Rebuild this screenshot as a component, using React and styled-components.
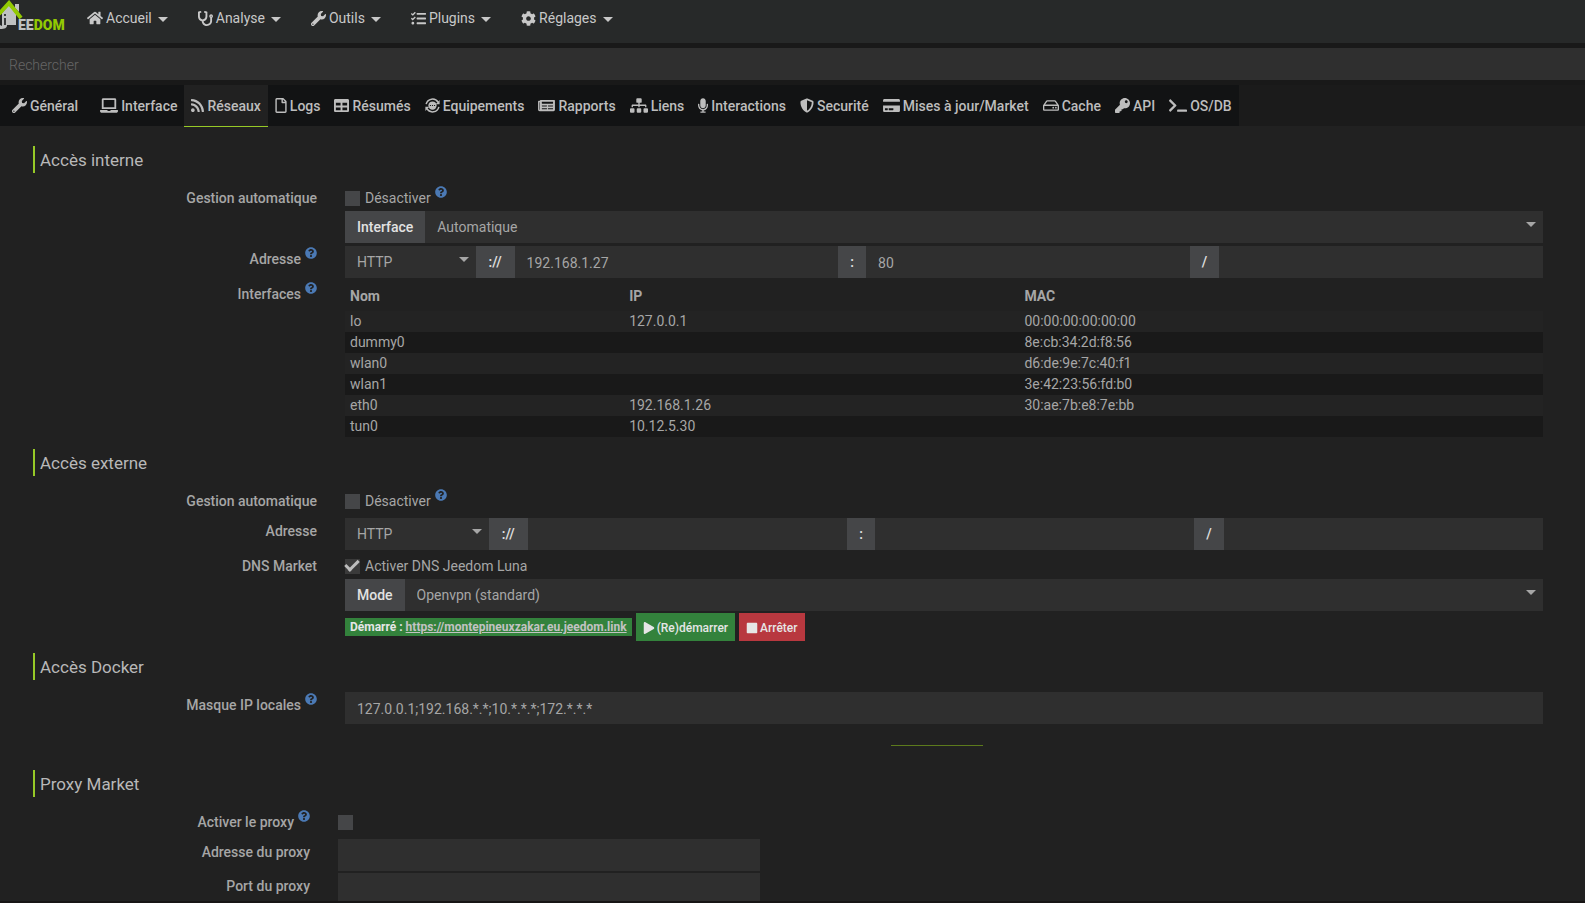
import React, { useState } from 'react';
import styled, { createGlobalStyle } from 'styled-components';
import {
  FaHome, FaStethoscope, FaWrench, FaTasks, FaCog, FaLaptop, FaRss, FaRegFile,
  FaTable, FaNewspaper, FaSitemap, FaMicrophone, FaShieldAlt, FaCreditCard,
  FaRegHdd, FaKey, FaTerminal, FaQuestionCircle, FaPlay, FaStop,
} from 'react-icons/fa';

const GlobalStyle = createGlobalStyle`
  * { box-sizing: border-box; }
  body {
    margin: 0;
    background: #212121;
    color: #a6a6a6;
    font-family: Roboto, "Liberation Sans", sans-serif;
    font-size: 14px;
    line-height: 20px;
  }
  input, select, button { font: inherit; color: inherit; }
`;

// --- Page ---
const Page = styled.div`
  display: flex;
  flex-direction: column;
  height: 100vh;
  overflow: hidden;
`;

const Footer = styled.div`
  flex: none;
  height: 2px;
  background: #171515;
`;

// --- Top bar ---
const TopBar = styled.header`
  display: flex;
  flex: none;
  height: 43px;
  background: #272929;
`;

const Logo = styled.svg`
  width: 72px;
  height: 34px;
  flex: none;
`;

const Menu = styled.nav`
  display: flex;
  height: 36px;
`;

const MenuLink = styled.a`
  display: flex;
  align-items: center;
  gap: 3px;
  padding: 0 15px;
  color: #c8c8c8;
  text-decoration: none;

  svg { flex: none; }

  &::after {
    content: "";
    margin: 2px 0 0 3px;
    border: 5px solid transparent;
    border-top-color: currentColor;
    border-bottom: 0;
  }
`;

const SearchBar = styled.div`
  flex: none;
  padding: 5px 0;
  background: #191919;

  input {
    display: block;
    width: 100%;
    height: 32px;
    padding: 2px 9px 0;
    border: 0;
    background: #2f2f2f;
    outline: none;
  }

  input::placeholder { color: #666; font-weight: 300; }
`;

// --- Tabs ---
const TabBar = styled.nav`
  display: flex;
  flex: none;
  height: 42px;
  background: linear-gradient(#1b1b1b 41px, #212121 41px);
`;

const Tab = styled.a`
  display: flex;
  align-items: center;
  gap: 3px;
  height: ${props => props.$active ? '42px' : '41px'};
  padding: 0 7px;
  background: ${props => props.$active ? '#212121' : '#121314'};
  border-bottom: ${props => props.$active ? '1px solid #96c927' : '0'};
  color: #bdbdbd;
  font-weight: 500;
  text-decoration: none;
  white-space: nowrap;

  svg {
    flex: none;
    width: ${props => props.$icon}px;
    height: 15px;
  }

  &:first-child { padding: 0 15px 0 12px; }
`;

// --- Form ---
const Panel = styled.main`
  flex: 1;
  min-height: 0;
  overflow: hidden;
  padding: 19px 42px 0 33px;
`;

const Section = styled.section`
  margin-bottom: 12px;
`;

const Legend = styled.h2`
  margin: 0 0 12px;
  padding: 2px 0 0 5px;
  border-left: 2px solid #96c927;
  color: #b8b8b8;
  font-size: 17px;
  font-weight: 400;
  line-height: 25px;
`;

const Row = styled.div`
  display: grid;
  grid-template-columns: ${props => props.$narrow ? '277px 422px' : '284px minmax(0, 1fr)'};
  column-gap: 28px;
  min-height: ${props => props.$narrow ? 28 : 27}px;
  margin-bottom: ${props => props.$narrow ? 2 : 3}px;
`;

const RowLabel = styled.label`
  padding-top: 3px;
  font-weight: 500;
  text-align: right;
`;

const HelpIcon = styled(FaQuestionCircle)`
  margin: -6px 0 0 4px;
  width: 12px;
  height: 12px;
  color: #4b79b4;
  vertical-align: 5px;
`;

const Field = styled.div`
  display: flex;
  flex-direction: column;
`;

const CheckLine = styled.label`
  display: flex;
  align-items: center;
  height: 26px;
`;

const CheckBox = styled.input.attrs({ type: 'checkbox' })`
  appearance: none;
  display: grid;
  place-content: center;
  width: 15px;
  height: 15px;
  margin: 0 5px 0 0;
  background: #454648;

  &:checked { background: #3a3a3a; }

  &:checked::after {
    content: "";
    box-sizing: border-box;
    width: 8px;
    height: 14px;
    margin: 0 2px 5px 0;
    border: solid #bdbdbd;
    border-width: 0 3px 3px 0;
    transform: rotate(45deg);
  }
`;

const InputGroup = styled.div`
  display: flex;
  height: 32px;
`;

const Addon = styled.span`
  display: flex;
  align-items: center;
  padding: 0 ${props => props.$wide ? 13 : 12}px;
  background: #454648;
  color: #e2e2e2;
  font-weight: 500;
`;

const TextInput = styled.input`
  flex: 1;
  width: 100%;
  min-width: 0;
  min-height: 32px;
  padding: 1px 12px 0;
  border: 0;
  background: #2f2f2f;
  outline: none;
`;

const SelectBox = styled.div`
  position: relative;
  flex: ${props => props.$width ? `0 0 ${props.$width}` : '1'};

  select {
    appearance: none;
    width: 100%;
    height: 32px;
    padding: 0 12px;
    border: 0;
    background: #2f2f2f;
    outline: none;
  }

  &::after {
    content: "";
    position: absolute;
    top: 11px;
    right: 7px;
    border: 5px solid transparent;
    border-top-color: #a6a6a6;
    border-bottom: 0;
    pointer-events: none;
  }
`;

const InterfaceTable = styled.table`
  width: 100%;
  border-collapse: collapse;
  table-layout: fixed;
  text-align: left;

  th { height: 30px; padding: 0 5px; font-weight: 700; }
  th:nth-child(1) { width: 23.3%; }
  th:nth-child(2) { width: 33%; }
  td { height: 21px; padding: 0 5px; line-height: 19px; }
  tbody tr { background: #232323; }
  tbody tr:nth-child(even) { background: #191919; }
`;

const Actions = styled.div`
  display: flex;
  align-items: center;
  gap: 4px;
  margin-top: 2px;
`;

const Status = styled.span`
  height: 18px;
  padding: 0 5px;
  background: #33823c;
  color: #e6e6e6;
  font-size: 12px;
  font-weight: 700;
  line-height: 18px;

  a { color: #c3c3c3; }
`;

const ActionButton = styled.button`
  display: flex;
  align-items: center;
  gap: 2px;
  height: 28px;
  padding: 1px 7px 0;
  border: 0;
  background: ${props => props.$danger ? '#b8383f' : '#33823c'};
  color: #e6e6e6;
  font-size: 12px;
  font-weight: 500;
`;

const Separator = styled.hr`
  width: 92px;
  height: 1px;
  margin: 21px 0 12px 45.6%;
  border: 0;
  background: #5c7a1c;
`;

// --- Data ---
const menus = [
  { icon: FaHome, label: 'Accueil', size: 16 },
  { icon: FaStethoscope, label: 'Analyse', size: 15 },
  { icon: FaWrench, label: 'Outils', size: 15 },
  { icon: FaTasks, label: 'Plugins', size: 15 },
  { icon: FaCog, label: 'Réglages', size: 15 },
];

// Round arrows with a small plug head in the middle
const EquipmentIcon = () => (
  <svg viewBox="0 0 16 16" fill="none" stroke="currentColor" strokeWidth="1.6">
    <path d="M1.2 6.6A7 7 0 0 1 14 4.6M14.8 9.4A7 7 0 0 1 2 11.4" />
    <path d="M15.6 2.2v4.4h-4.2zM.4 13.8V9.4h4.2z" fill="currentColor" stroke="none" />
    <circle cx="8" cy="8" r="4.4" fill="currentColor" stroke="none" />
    <path d="M5.2 8h1.2M7.4 8h1.2M9.6 8h1.2" stroke="#121314" strokeWidth="1" />
  </svg>
);

const tabs = [
  { icon: FaWrench, label: 'Général', width: 15 },
  { icon: FaLaptop, label: 'Interface', width: 18 },
  { icon: FaRss, label: 'Réseaux', width: 13 },
  { icon: FaRegFile, label: 'Logs', width: 12 },
  { icon: FaTable, label: 'Résumés', width: 15 },
  { icon: EquipmentIcon, label: 'Equipements', width: 15 },
  { icon: FaNewspaper, label: 'Rapports', width: 17 },
  { icon: FaSitemap, label: 'Liens', width: 18 },
  { icon: FaMicrophone, label: 'Interactions', width: 10 },
  { icon: FaShieldAlt, label: 'Securité', width: 14 },
  { icon: FaCreditCard, label: 'Mises à jour/Market', width: 17 },
  { icon: FaRegHdd, label: 'Cache', width: 16 },
  { icon: FaKey, label: 'API', width: 15 },
  { icon: FaTerminal, label: 'OS/DB', width: 18 },
];

const interfaces = [
  { name: 'lo', ip: '127.0.0.1', mac: '00:00:00:00:00:00' },
  { name: 'dummy0', ip: '', mac: '8e:cb:34:2d:f8:56' },
  { name: 'wlan0', ip: '', mac: 'd6:de:9e:7c:40:f1' },
  { name: 'wlan1', ip: '', mac: '3e:42:23:56:fd:b0' },
  { name: 'eth0', ip: '192.168.1.26', mac: '30:ae:7b:e8:7e:bb' },
  { name: 'tun0', ip: '10.12.5.30', mac: '' },
];

const JeedomLogo = () => (
  <Logo viewBox="0 0 72 34" role="img" aria-label="Jeedom">
    <path d="M2 13 9 5l7 9v11H7c0 3-2 4-7 4v-4l2 1z" fill="#bfc1c1" />
    <path d="M15 4h4v8l-4-4z" fill="#bfc1c1" />
    <path d="M4 14h2v2H4zM4 18h2v7H4z" fill="#3a3c3c" />
    <path d="M-1 14 9 3l12 15" fill="none" stroke="#93ca02" strokeWidth="4" />
    <text x="18" y="30" fontSize="14" fontWeight="900" fill="#bfc1c1">EE<tspan fill="#93ca02">DOM</tspan></text>
  </Logo>
);

const Address = ({ id, selectWidth, host, port }) => (
  <InputGroup>
    <SelectBox $width={selectWidth}>
      <select id={id} defaultValue="HTTP">
        <option>HTTP</option>
        <option>HTTPS</option>
      </select>
    </SelectBox>
    <Addon $wide>://</Addon>
    <TextInput aria-label="Hôte" defaultValue={host} />
    <Addon>:</Addon>
    <TextInput aria-label="Port" defaultValue={port} />
    <Addon>/</Addon>
    <TextInput aria-label="Complément" />
  </InputGroup>
);

// --- Main Component ---
const App = () => {
  const [activeTab, setActiveTab] = useState('Réseaux');

  return (
    <Page>
      <GlobalStyle />
      <TopBar>
        <JeedomLogo />
        <Menu>
          {menus.map(({ icon: Icon, label, size }) => (
            <MenuLink href="#" key={label}><Icon size={size} />{label}</MenuLink>
          ))}
        </Menu>
      </TopBar>
      <SearchBar>
        <input type="text" placeholder="Rechercher" aria-label="Rechercher" />
      </SearchBar>
      <TabBar>
        {tabs.map(({ icon: Icon, label, width }) => (
          <Tab
            href="#"
            key={label}
            $icon={width}
            $active={label === activeTab}
            onClick={() => setActiveTab(label)}
          >
            <Icon />{label}
          </Tab>
        ))}
      </TabBar>

      <Panel>
        <Section>
          <Legend>Accès interne</Legend>
          <Row>
            <RowLabel htmlFor="internal-auto">Gestion automatique</RowLabel>
            <Field>
              <CheckLine><CheckBox id="internal-auto" /><span>Désactiver<HelpIcon /></span></CheckLine>
              <InputGroup>
                <Addon as="label" htmlFor="interface">Interface</Addon>
                <SelectBox>
                  <select id="interface"><option>Automatique</option></select>
                </SelectBox>
              </InputGroup>
            </Field>
          </Row>
          <Row>
            <RowLabel htmlFor="internal-address">Adresse<HelpIcon /></RowLabel>
            <Address id="internal-address" selectWidth="10.9%" host="192.168.1.27" port="80" />
          </Row>
          <Row>
            <RowLabel as="span">Interfaces<HelpIcon /></RowLabel>
            <InterfaceTable>
              <thead>
                <tr><th>Nom</th><th>IP</th><th>MAC</th></tr>
              </thead>
              <tbody>
                {interfaces.map(item => (
                  <tr key={item.name}><td>{item.name}</td><td>{item.ip}</td><td>{item.mac}</td></tr>
                ))}
              </tbody>
            </InterfaceTable>
          </Row>
        </Section>

        <Section>
          <Legend>Accès externe</Legend>
          <Row>
            <RowLabel htmlFor="external-auto">Gestion automatique</RowLabel>
            <CheckLine><CheckBox id="external-auto" /><span>Désactiver<HelpIcon /></span></CheckLine>
          </Row>
          <Row>
            <RowLabel htmlFor="external-address">Adresse</RowLabel>
            <Address id="external-address" selectWidth="12%" />
          </Row>
          <Row>
            <RowLabel htmlFor="dns">DNS Market</RowLabel>
            <Field>
              <CheckLine><CheckBox id="dns" defaultChecked />Activer DNS Jeedom Luna</CheckLine>
              <InputGroup>
                <Addon as="label" htmlFor="mode">Mode</Addon>
                <SelectBox>
                  <select id="mode"><option>Openvpn (standard)</option></select>
                </SelectBox>
              </InputGroup>
              <Actions>
                <Status>Démarré : <a href="#">https://montepineuxzakar.eu.jeedom.link</a></Status>
                <ActionButton type="button"><FaPlay size={12} />(Re)démarrer</ActionButton>
                <ActionButton type="button" $danger><FaStop size={12} />Arrêter</ActionButton>
              </Actions>
            </Field>
          </Row>
        </Section>

        <Section>
          <Legend>Accès Docker</Legend>
          <Row>
            <RowLabel htmlFor="local-mask">Masque IP locales<HelpIcon /></RowLabel>
            <Field>
              <TextInput id="local-mask" defaultValue="127.0.0.1;192.168.*.*;10.*.*.*;172.*.*.*" />
              <Separator />
            </Field>
          </Row>
        </Section>

        <Section>
          <Legend>Proxy Market</Legend>
          <Row $narrow>
            <RowLabel htmlFor="proxy">Activer le proxy<HelpIcon /></RowLabel>
            <CheckLine><CheckBox id="proxy" /></CheckLine>
          </Row>
          <Row $narrow>
            <RowLabel htmlFor="proxy-address">Adresse du proxy</RowLabel>
            <TextInput id="proxy-address" />
          </Row>
          <Row $narrow>
            <RowLabel htmlFor="proxy-port">Port du proxy</RowLabel>
            <TextInput id="proxy-port" />
          </Row>
        </Section>
      </Panel>
      <Footer />
    </Page>
  );
};

export default App;
